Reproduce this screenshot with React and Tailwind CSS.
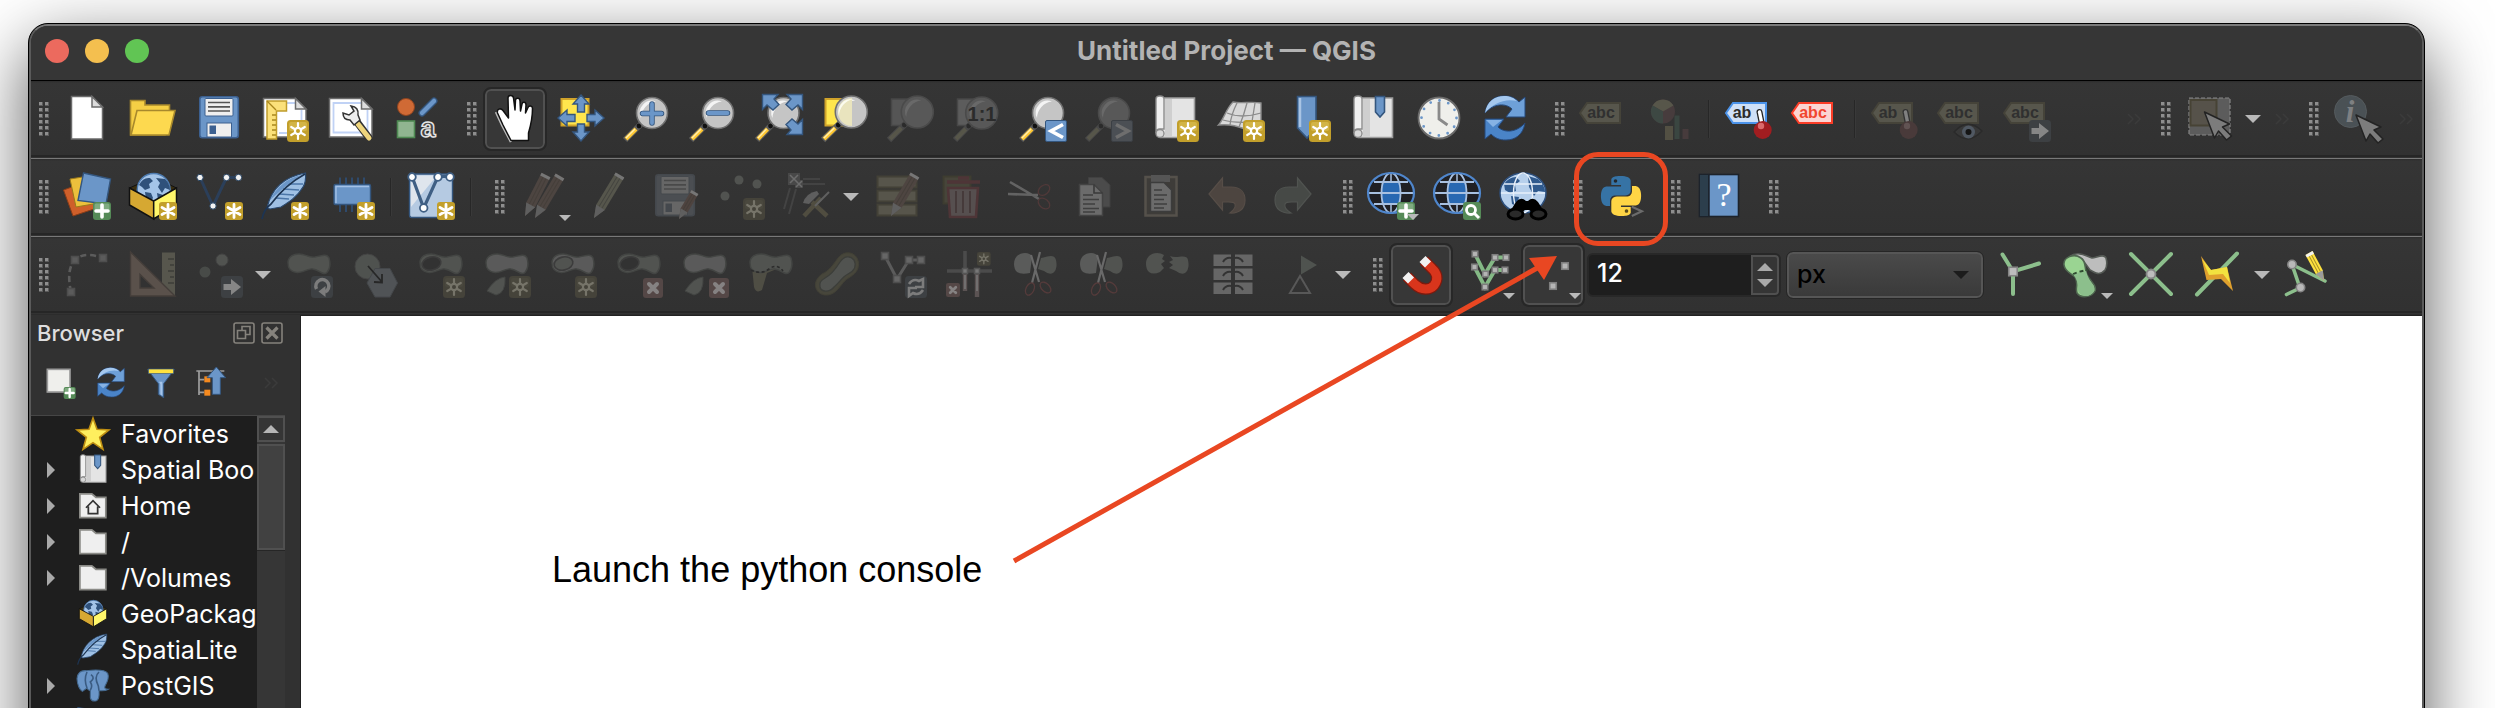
import React from "react";

/* ---------- shared drawing parts ---------- */

const BLUE = "#6b96c8";
const BLUE_EDGE = "#34567e";
const GREEN = "#8cbf8c";
const GLYPH = "#5b5b5b";
const MUTED = "#515350";

function Ico({ children, size = "w-12 h-12" }) {
  return (
    <svg viewBox="0 0 48 48" className={`${size} block shrink-0 overflow-visible`} fill="none" aria-hidden="true">
      {children}
    </svg>
  );
}

function Star({ dim, x = 26, y = 25 }) {
  const c = dim ? "#767469" : "#ffffff";
  return (
    <g transform={`translate(${x} ${y})`}>
      <rect width="22" height="22" rx="3.5" fill={dim ? "#45433a" : "#c29f2b"} />
      <rect x="2" y="2" width="18" height="9" rx="2" fill={dim ? "#4a483e" : "#d2b446"} />
      <g stroke={c} strokeWidth="2.2" strokeLinecap="round">
        <path d="M11 3V19M4.200 7L17.800 15M17.800 7L4.200 15" />
      </g>
      <circle cx="11" cy="11" r="4.2" fill={c} />
      <circle cx="11" cy="11" r="2" fill={dim ? "#45433a" : "#c29f2b"} />
    </g>
  );
}

function Asterisk() {
  return (
    <g transform="translate(30 29)">
      <rect width="18" height="18" rx="3" fill="#c29f2b" />
      <path d="M9 2.5V15.5M3 5.5L15 12.5M15 5.5L3 12.5" stroke="#fff" strokeWidth="2.8" strokeLinecap="round" />
    </g>
  );
}

function Plus({ x = 30, y = 29 }) {
  return (
    <g transform={`translate(${x} ${y})`}>
      <rect width="18" height="18" rx="3" fill="#558a57" />
      <rect x="1.5" y="1.5" width="15" height="7.5" rx="1.5" fill="#7fab80" />
      <path d="M9 3V15M3 9H15" stroke="#fff" strokeWidth="3.6" strokeLinecap="round" />
    </g>
  );
}

function Cross({ x = 28, y = 27, s = 1 }) {
  return (
    <g transform={`translate(${x} ${y}) scale(${s})`}>
      <rect width="20" height="20" rx="3" fill="#544746" />
      <path d="M6 6L14 14M14 6L6 14" stroke="#858282" strokeWidth="4" strokeLinecap="round" />
    </g>
  );
}

function ArrowBadge() {
  return (
    <g transform="translate(26 25)">
      <rect width="22" height="22" rx="3.5" fill="#3d4043" />
      <path d="M2.5 8H10V3L20 11L10 19V14H2.5Z" fill="#868686" />
    </g>
  );
}

function TurnBadge() {
  return (
    <g transform="translate(26 25)">
      <rect width="22" height="22" rx="3.5" fill="#3d4043" />
      <path d="M5.500 13A6.500 6.500 0 1 1 14 16" stroke="#7c7c7c" strokeWidth="3.400" />
      <path d="M14.500 10V21L7.500 15.500Z" fill="#7c7c7c" />
    </g>
  );
}

function Drop({ x = 46, y = 45 }) {
  return <path d={`M${x - 6} ${y - 3}H${x + 6}L${x} ${y + 3}Z`} fill="#b9b9b9" />;
}

function Lens({ cx = 29, cy = 18, r = 15.5, dim, children }) {
  return (
    <g>
      <path d={`M${cx - 10} ${cy + 10}L2 45`} stroke={dim ? "#484848" : "#5c5c5c"} strokeWidth="6" />
      <path d={`M${cx - 16} ${cy + 16}L3 44`} stroke={dim ? "#57564a" : "#ffc832"} strokeWidth="4" />
      <path d={`M${cx - 17} ${cy + 16}L3 43`} stroke={dim ? "#57564a" : "#ffeeb0"} strokeWidth="1.4" />
      <circle cx={cx - 13} cy={cy + 13} r="2.4" fill={dim ? "#2b2b2b" : "#111"} />
      <circle cx={cx} cy={cy} r={r} fill={dim ? "#585858" : "#c5c5c5"} stroke={dim ? "#4a4a4a" : "#6f6f6f"} strokeWidth="1.6" />
      <path d={`M${cx - 11} ${cy + 5}A12 12 0 0 1 ${cx + 4} ${cy - 11.5}A17 17 0 0 0 ${cx - 11} ${cy + 5}Z`} fill={dim ? "#696969" : "#f4f4f4"} />
      {children}
    </g>
  );
}

function Paper({ children }) {
  return (
    <g>
      <path d="M10 3H43.5V42.5H10Z" fill="#e4e4e4" stroke="#9d9d9d" strokeWidth="1.6" />
      <path d="M14 4H21V41.5H14Z" fill="#cfcfcf" />
      <path d="M5 4Q5 1 9 1Q13 1 13 4V34H9Q5 34 5 38Z" fill="#f0f0f0" stroke="#8c8c8c" strokeWidth="1.4" />
      <circle cx="9" cy="38.5" r="4" fill="#d9d9d9" stroke="#8c8c8c" strokeWidth="1.4" />
      {children}
    </g>
  );
}

function Pencil({ x1, y1, x2, y2, w = 9, body = "#57493f", tip = "#5f5f5f", cap = "#767676", line = "#453f3a" }) {
  const len = Math.hypot(x2 - x1, y2 - y1);
  const a = (Math.atan2(y2 - y1, x2 - x1) * 180) / Math.PI;
  const h = w / 2;
  const t = w * 1.25;
  return (
    <g transform={`translate(${x1} ${y1}) rotate(${a})`}>
      <path d={`M0 0L${t} ${-h}H${len}V${h}H${t}Z`} fill={body} />
      <path d={`M${t} ${-h / 3}H${len}M${t} ${h / 3}H${len}`} stroke={line} strokeWidth="1" />
      <path d={`M0 0L${t} ${-h}V${h}Z`} fill={tip} />
      <path d={`M${len - 3} ${-h}H${len}V${h}H${len - 3}Z`} fill={cap} />
    </g>
  );
}

function Tag({ fill, edge, ink, text }) {
  return (
    <g>
      <path d="M1 18L8 8H41V28H8Z" fill={fill} stroke={edge} strokeWidth="2" />
      <text x={text === "ab" ? 17 : 22} y="23" textAnchor="middle" fontSize="16" fontWeight="700" fontFamily="'Liberation Sans', Arial, sans-serif" fill={ink}>
        {text}
      </text>
    </g>
  );
}

const DimTag = ({ text }) => <Tag fill="#57564c" edge="#454339" ink="#303030" text={text} />;

function Pin({ dim }) {
  return (
    <g>
      <path d="M34.5 17L36.5 27" stroke={dim ? "#333" : "#222"} strokeWidth="6" strokeLinecap="round" />
      <path d="M34.5 17L36.5 27" stroke={dim ? "#808080" : "#fff"} strokeWidth="3.4" strokeLinecap="round" />
      <circle cx="37.7" cy="35" r="9" fill={dim ? "#493a3a" : "#a11d20"} />
      <circle cx="36" cy="31" r="3.2" fill={dim ? "#615353" : "#dc6a6a"} />
    </g>
  );
}

function Disk({ body, edge, paper, ink }) {
  return (
    <g>
      <rect x="4.8" y="1.8" width="38.5" height="41" rx="2.5" fill={body} stroke={edge} strokeWidth="1.6" />
      <rect x="10" y="3.5" width="28" height="17.5" rx="1" fill={paper} stroke={edge} />
      <path d="M13 7.5H35M13 11.8H35M13 16H35" stroke={ink} strokeWidth="1.7" />
      <rect x="12" y="28" width="24.5" height="14" fill={paper} stroke={edge} />
      <rect x="14.5" y="30.5" width="6.5" height="8.5" fill={edge} />
    </g>
  );
}

const BLOB = "M3 12C3 5 9 3 14 3C21 3 23 7 30 6C36 5 42 2 44 7C45.500 12 45 18 42 21.500C38 25 35 19 28 18C22 17 20 22 12 21.500C6 21 3 18 3 12Z";

const Blob = ({ fill = MUTED }) => <path d={BLOB} fill={fill} stroke="#434543" strokeWidth="1.4" />;
const Part = () => <path d="M4 40Q12 27 22 26Q23 42 13 44Z" fill={MUTED} stroke="#434543" />;

function Ring({ filled }) {
  return (
    <g>
      <Blob fill={filled ? "#5a5a5a" : MUTED} />
      <ellipse cx="14.500" cy="12.500" rx="9.500" ry="6.500" transform="rotate(-12 14.500 12.500)" fill={filled ? MUTED : "#323232"} stroke="#3c3c3c" strokeWidth="1.600" />
    </g>
  );
}

function Scissors() {
  return (
    <g>
      <path d="M29 1L21 32M20 4L28 31" stroke="#696969" strokeWidth="2.200" />
      <ellipse cx="19" cy="38" rx="4" ry="6.500" transform="rotate(25 19 38)" stroke="#553b3b" strokeWidth="1.300" />
      <ellipse cx="34.500" cy="36.500" rx="4" ry="6.500" transform="rotate(-45 34.500 36.500)" stroke="#553b3b" strokeWidth="1.300" />
    </g>
  );
}

function Halves() {
  return (
    <g>
      <path d="M3 13C3 6 8 2 14 2C18 2 21 4 21 6L19 22Q10 24 6 21Q3 18 3 13Z" fill="#5a5b5a" />
      <path d="M30 7C36 6 43 2 45 9Q47 18 42 22Q38 24 33 20L27 18Z" fill={MUTED} />
    </g>
  );
}

function Node({ x, y, s = 7, c = "#b5b5b5", e = "#7e7e7e" }) {
  return <rect x={x - s / 2} y={y - s / 2} width={s} height={s} fill={c} stroke={e} strokeWidth="1.6" />;
}

function Globe() {
  return (
    <g>
      <ellipse cx="24" cy="20" rx="23" ry="20" fill="#202024" />
      <ellipse cx="24" cy="20" rx="9.500" ry="20" fill="#202024" />
      <path d="M15 9H33Q35 20 33 31H15Q13 20 15 9Z" fill="#2868b2" />
      <path d="M7 9H41M2 20H46M7 31H41" stroke="#a8c0e0" strokeWidth="1.8" />
      <ellipse cx="24" cy="20" rx="9.500" ry="20" stroke="#a8c0e0" strokeWidth="1.800" />
      <path d="M24 0V8M24 32V40" stroke="#a8c0e0" strokeWidth="1.5" />
      <ellipse cx="24" cy="20" rx="23" ry="20" stroke="#4f86cc" strokeWidth="2.2" />
    </g>
  );
}

function Land() {
  return (
    <g fill="#2f517b">
      <path d="M10 12Q14 4 21 5L24 8L20 11L21 15L16 17L13 14Z" />
      <path d="M16 19L22 20L24 25L20 31L17 26Z" />
      <path d="M27 5L36 6Q41 11 41 17L36 15L33 20L29 14L31 10Z" />
      <path d="M28 20L34 22L33 29L29 27Z" />
    </g>
  );
}

function Package() {
  return (
    <g>
      <path d="M.5 15L24.700 4L47.500 15L24.700 28Z" fill="#3b2f10" stroke="#111" />
      <circle cx="24.700" cy="17" r="16.500" fill="#a4c4e8" stroke="#4d7bb0" strokeWidth="1.400" />
      <Land />
      <path d="M.5 15L24.700 28V46L.5 32Z" fill="#d6a832" stroke="#111" strokeWidth="1.500" />
      <path d="M47.500 15L24.700 28V46L47.500 32Z" fill="#fff76b" stroke="#111" strokeWidth="1.500" />
    </g>
  );
}

function Feather() {
  return (
    <g>
      <path d="M6 35C10 17 22 4 44.500 0C45 6 44 11 42 14C36 24 28 29 20 34L9 36Z" fill="#9fc0e4" stroke="#2b4a70" strokeWidth="1.200" />
      <path d="M15 25L28 26M18 21L33 22M22 16L38 17M27 11L42 11" stroke="#4c76a8" strokeWidth="1.400" />
      <path d="M9 27C15 15 26 5 40 2L25 13Z" fill={BLUE} />
      <path d="M1 46Q3 36 10 31Q24 12 44 1" stroke="#1d3452" strokeWidth="1.800" />
    </g>
  );
}

function Refresh() {
  return (
    <g stroke="#25487a" strokeWidth="1">
      <path d="M4 18C6 6 14 1 23 1C30 1 34 3 38 7L44 2V22H25L31 14C25 8 13 8 4 18Z" fill="#6ea0d8" />
      <path d="M4 18C6 6 14 1 23 1C29 1 33 3 36 6C24 3 12 8 4 18Z" fill="#a5c8ee" stroke="none" />
      <path d="M44 28C42 40 34 45 25 45C18 45 14 43 10 39L4 44V24H23L17 32C23 38 35 38 44 28Z" fill="#4a84c8" />
      <path d="M5 25H21L12 32Z" fill="#86b2e4" stroke="none" />
    </g>
  );
}

function Cursor({ x, y }) {
  return (
    <path
      transform={`translate(${x} ${y})`}
      d="M0 0L25 12L18 15L27 24L22 28L14 19L10 26Z"
      fill="#7c7c7c"
      stroke="#232323"
      strokeWidth="1.5"
      strokeLinejoin="round"
    />
  );
}

const FOUR_WAY = "M24 0L32 9H27.500V17H20.500V9H16ZM24 46L16 37H20.500V29H27.500V37H32ZM1 23L10 15V19.500H18V26.500H10V31ZM47 23L38 31V26.500H30V19.500H38V15Z";

const PY =
  "M14.25.18l.9.2.73.26.59.3.45.32.34.34.25.34.16.33.1.3.04.26.02.2-.01.13V8.5l-.05.63-.13.55-.21.46-.26.38-.3.31-.33.25-.35.19-.35.14-.33.1-.3.07-.26.04-.21.02H8.77l-.69.05-.59.14-.5.22-.41.27-.33.32-.27.35-.2.36-.15.37-.1.35-.07.32-.04.27-.02.21v3.06H3.17l-.21-.03-.28-.07-.32-.12-.35-.18-.36-.26-.36-.36-.35-.46-.32-.59-.28-.73-.21-.88-.14-1.05-.05-1.23.06-1.22.16-1.04.24-.87.32-.71.36-.57.4-.44.42-.33.42-.24.4-.16.36-.1.32-.05.24-.01h.16l.06.01h8.16v-.83H6.18l-.01-2.75-.02-.37.05-.34.11-.31.17-.28.25-.26.31-.23.38-.2.44-.18.51-.15.58-.12.64-.1.71-.06.77-.04.84-.02 1.27.05z";

/* ---------- icons ---------- */

const I = {
  newFile: (
    <>
      <path d="M8.500 1.500H29L39.500 12V44H8.500Z" fill="#fff" stroke="#6b6b6b" strokeWidth="1.500" />
      <path d="M29 1.500V12H39.500Z" fill="#dcdcdc" stroke="#6b6b6b" strokeWidth="1.500" />
    </>
  ),
  open: (
    <g stroke="#a8892c" strokeWidth="1.600">
      <path d="M1.500 40V5.500H16V10H40.500V20L36 40Z" fill="#f5cf45" />
      <path d="M8 15.500H46L40 40H2Z" fill="#fdd94f" />
    </g>
  ),
  save: <Disk body={BLUE} edge="#3c6090" paper="#efefef" ink="#555" />,
  newLayout: (
    <>
      <path d="M2.500 3.500H34.500L45 14V42H2.500Z" fill="#fff" stroke="#6b6b6b" strokeWidth="1.500" />
      <path d="M20 8H34M40.500 15V38H18" stroke="#c0d2f5" strokeWidth="1.800" />
      <path d="M34.500 3.500V14H45Z" fill="#ddd" stroke="#6b6b6b" strokeWidth="1.500" />
      <path d="M6 6H25.500V16H15.500V44H6Z" fill="#fbe17a" stroke="#bf9c2c" strokeWidth="1.500" />
      <path d="M6 6L15 15M11 20H15M11 25H15M11 30H15M11 35H15M11 40H15" stroke="#a8861e" strokeWidth="1.400" />
      <Star />
    </>
  ),
  layoutManager: (
    <>
      <path d="M2.500 3.500H34.500L45 14V42H2.500Z" fill="#fff" stroke="#6b6b6b" strokeWidth="1.500" />
      <path d="M34 8H6.500V37.500H40.500V15" stroke="#c0d2f5" strokeWidth="1.800" />
      <path d="M34.500 3.500V14H45Z" fill="#ddd" stroke="#6b6b6b" strokeWidth="1.500" />
      <path d="M30 27L42 43" stroke="#333" strokeWidth="7.500" strokeLinecap="round" />
      <path d="M31 29L42 43" stroke="#efd57c" strokeWidth="5" strokeLinecap="round" />
      <path d="M16 18Q16 25 23 25L27 30L33 25L31 20Q32 12 24 11L27 16L22 20Z" fill="#ededed" stroke="#333" strokeWidth="1.500" />
    </>
  ),
  style: (
    <>
      <circle cx="13" cy="12" r="8.500" fill="#d06a35" stroke="#8e431f" />
      <path d="M29 18L41 6" stroke={BLUE_EDGE} strokeWidth="7" strokeLinecap="round" />
      <path d="M29 18L41 6" stroke={BLUE} strokeWidth="4.500" strokeLinecap="round" />
      <rect x="4.500" y="26" width="17" height="16.500" fill="#90b590" stroke="#4f8a53" strokeWidth="1.600" />
      <text x="35" y="42" textAnchor="middle" fontSize="27" fontWeight="700" fontFamily="'Liberation Sans', Arial, sans-serif" fill="#444" stroke="#e6e6e6" strokeWidth="1.400">a</text>
    </>
  ),
  hand: (
    <>
      <path d="M20 47L11 30L5 17" stroke="#b9b9b9" strokeWidth="2.500" />
      <path
        d="M20 45.500L12 30L6.500 18C5.500 14 9.500 12.500 12 15.500L17.500 23L17 3C17 -.5 22 -.5 22.500 3L24 15L24.500 5C25 2.500 29 2.500 29 6L29.500 16L31 9C31.500 6.500 35 6.500 35 10L34.500 18L37 12.500C38 10 41.500 10.500 41.500 13.500C41.500 22 39 33 37.500 38V45.500Z"
        fill="#fff"
        stroke="#111"
        strokeWidth="1.500"
        strokeLinejoin="round"
      />
    </>
  ),
  panSel: (
    <>
      <rect x="4.500" y="4" width="27" height="26.500" fill="#ffe64d" stroke="#d0a32a" strokeWidth="2" />
      <path d={FOUR_WAY} fill={BLUE} stroke={BLUE_EDGE} strokeWidth="1.400" />
    </>
  ),
  zoomIn: (
    <Lens>
      <path d="M29 9V28M19.500 18.500H38.500" stroke={BLUE_EDGE} strokeWidth="5.500" strokeLinecap="round" />
      <path d="M29 9V28M19.500 18.500H38.500" stroke={BLUE} strokeWidth="3.800" strokeLinecap="round" />
    </Lens>
  ),
  zoomOut: (
    <Lens>
      <path d="M19.500 18H38.500" stroke={BLUE_EDGE} strokeWidth="5.500" strokeLinecap="round" />
      <path d="M19.500 18H38.500" stroke={BLUE} strokeWidth="3.800" strokeLinecap="round" />
    </Lens>
  ),
  zoomFull: (
    <Lens cx={28.5}>
      <path d="M7.500 -.5H23L19 4L24 9.500L18 15L12 10L7.500 14.500ZM47.500 -.5H32L36 4L31 9.500L37 15L43 10L47.500 14.500ZM47.500 39.500H32L36 35L31 29.500L37 24L43 29L47.500 24.500Z" fill={BLUE} stroke={BLUE_EDGE} strokeWidth="1.400" />
    </Lens>
  ),
  zoomLayer: (
    <>
      <rect x="4.500" y="4" width="24" height="26.500" fill="#ffe64d" stroke="#d0a32a" strokeWidth="2" />
      <Lens cx={30.3} cy={17} r={16}>
        <path d="M31 3A14 14 0 0 0 31 31Z" fill="#e9e4be" />
        <path d="M18 21A13 13 0 0 1 32 4A18 18 0 0 0 18 21Z" fill="#fbfbee" />
      </Lens>
    </>
  ),
  zoomSelDim: (
    <>
      <rect x="4.500" y="4" width="24" height="26.500" fill="#555" stroke="#474747" strokeWidth="1.500" />
      <Lens cx={30.3} cy={17} r={16} dim />
    </>
  ),
  zoomNative: (
    <>
      <rect x="4.500" y="4" width="24" height="26.500" fill="#5c5c5c" stroke="#474747" strokeWidth="1.500" />
      <Lens cx={28.7} cy={18} r={16} dim>
        <text x="29" y="25.500" textAnchor="middle" fontSize="20" fontWeight="700" fontFamily="'Liberation Sans', Arial, sans-serif" fill="#2b2b2b">1:1</text>
      </Lens>
    </>
  ),
  zoomLast: (
    <Lens>
      <rect x="26.500" y="25.500" width="21" height="21" rx="1.500" fill={BLUE} stroke={BLUE_EDGE} />
      <path d="M44 29.500L32 36L44 42.500" stroke="#fff" strokeWidth="3.600" />
    </Lens>
  ),
  zoomNext: (
    <Lens dim>
      <rect x="26.500" y="25.500" width="21" height="21" rx="1.500" fill="#4b4f54" stroke="#3b3f44" />
      <path d="M31 29.500L43 36L31 42.500" stroke="#6e6e6e" strokeWidth="3.600" />
    </Lens>
  ),
  newMap: (
    <Paper>
      <Star />
    </Paper>
  ),
  new3d: (
    <>
      <path d="M1.500 30C7 24 9 14 16 7C25 9 34 6 44 8V33Q36 36 28 34C18 30 10 29 1.500 30Z" fill="#d9d9d9" stroke="#8b8b8b" strokeWidth="1.400" />
      <path d="M10 18Q24 24 44 18M6 25Q20 29 44 26M20 8Q14 20 13 30M30 8Q27 20 22 32M38 8L34 33" stroke="#8b8b8b" strokeWidth="1.300" />
      <Star />
    </>
  ),
  newMark: (
    <>
      <path d="M14.500 1.500H33V33L24 43L14.500 33Z" fill={BLUE} stroke={BLUE_EDGE} strokeWidth="1.600" />
      <path d="M17 3V32" stroke="#a9c4e4" strokeWidth="2.500" />
      <Star />
    </>
  ),
  marks: (
    <Paper>
      <path d="M26.500 1.500H35.500V17L31 22L26.500 17Z" fill={BLUE} stroke={BLUE_EDGE} strokeWidth="1.600" />
    </Paper>
  ),
  clock: (
    <>
      <circle cx="24" cy="23" r="20.500" fill="#efefeb" stroke="#6b6b6b" strokeWidth="1.800" />
      <circle cx="24" cy="23" r="17.500" stroke={BLUE} strokeWidth="2.800" strokeDasharray="0 9.163" strokeLinecap="round" />
      <path d="M24 7V24L32.500 30" stroke="#8a8a8a" strokeWidth="2.800" />
    </>
  ),
  refresh: <Refresh />,
  abcDim: <DimTag text="abc" />,
  diagram: (
    <>
      <circle cx="18" cy="16.500" r="12" fill="#473c3d" />
      <path d="M18 16.500L7.600 10.500A12 12 0 0 1 28.400 10.500Z" fill="#57564a" />
      <path d="M18 16.500L7.600 10.500A12 12 0 0 0 18 28.500Z" fill="#3d4843" />
      <rect x="20" y="31" width="8" height="14" fill="#535043" />
      <rect x="29.500" y="20.500" width="5" height="23.500" fill="#3a4641" />
      <rect x="37.500" y="34" width="6" height="10" fill="#473b3c" />
    </>
  ),
  abPin: (
    <>
      <Tag fill="#cfe0f7" edge="#4b93ea" ink="#2c2c2c" text="ab" />
      <Pin />
    </>
  ),
  abcRed: <Tag fill="#fbd5d3" edge="#fb3d27" ink="#f1452f" text="abc" />,
  abPinDim: (
    <>
      <DimTag text="ab" />
      <Pin dim />
    </>
  ),
  abcEye: (
    <>
      <DimTag text="abc" />
      <path d="M17 37Q31 22 45 36Q31 51 17 37Z" fill="#383838" stroke="#2a2a2a" strokeWidth="1.400" />
      <circle cx="31.500" cy="37" r="6.500" fill="#505862" />
      <circle cx="31.500" cy="37" r="3" fill="#151515" />
    </>
  ),
  abcMove: (
    <>
      <DimTag text="abc" />
      <ArrowBadge />
    </>
  ),
  select: (
    <>
      <rect x="4" y="3" width="41" height="37" fill="#5c5c5c" stroke="#858585" strokeWidth="1.200" strokeDasharray="4 2" />
      <rect x="5.500" y="5" width="26" height="25.500" fill="#56524a" stroke="#474335" strokeWidth="2" />
      <Cursor x={19.5} y={17} />
    </>
  ),
  identify: (
    <>
      <circle cx="17.500" cy="16.500" r="16" fill="#4a5155" stroke="#555b5e" />
      <text x="17" y="27" textAnchor="middle" fontSize="31" fontStyle="italic" fontWeight="700" fontFamily="'Liberation Serif', serif" fill="#7e8082">i</text>
      <Cursor x={23} y={20} />
    </>
  ),

  dataSource: (
    <>
      <path d="M.5 17L20 10L34 35L10 43Z" fill="#cf5f2a" stroke="#8b3d18" />
      <path d="M7 6L26 3L36 30L13 34Z" fill="#ecc03c" stroke="#9a7a1c" />
      <path d="M20.500 0L47.500 6L43 31L15 27.500Z" fill={BLUE} stroke={BLUE_EDGE} strokeWidth="1.400" />
      <Plus />
    </>
  ),
  geopackage: (
    <>
      <Package />
      <Asterisk />
    </>
  ),
  shapefile: (
    <>
      <path d="M5 4.500L18 33L31.500 4.500H43.500" stroke="#2b3f5a" strokeWidth="3" />
      {[[5, 4.5], [18, 33], [31.5, 4.5], [43.5, 4.5]].map(([x, y]) => (
        <circle key={x} cx={x} cy={y} r="3.200" fill="#f2f2f2" stroke="#24405f" />
      ))}
      <Asterisk />
    </>
  ),
  spatialite: (
    <>
      <Feather />
      <Asterisk />
    </>
  ),
  memory: (
    <>
      <path d="M13 4.500V39M19 4.500V39M25 4.500V39M31 4.500V39M37 4.500V39" stroke="#2e4d73" strokeWidth="1.800" />
      <rect x="7" y="11.500" width="36.500" height="20" rx="1.500" fill={BLUE} stroke={BLUE_EDGE} strokeWidth="1.400" />
      <path d="M9 30V13.500H42" stroke="#a3c1e6" strokeWidth="1.400" />
      <Asterisk />
    </>
  ),
  virtual: (
    <>
      <rect x="2.500" y="1" width="43" height="43.500" rx="2.500" fill="#b5cae2" stroke="#34567e" strokeWidth="1.400" />
      <path d="M4 2.500H30L4 34Z" fill="#dfe5ed" />
      <path d="M5 3.500L16.700 35L31 3.500H43.500" stroke="#3f5f84" strokeWidth="3.200" />
      {[[5, 4], [16.7, 35], [31, 4], [43, 4]].map(([x, y]) => (
        <circle key={x} cx={x} cy={y} r="3.800" fill="#fff" stroke="#3f5f84" strokeWidth="1.800" />
      ))}
      <Asterisk />
    </>
  ),
  pencils: (
    <>
      <Pencil x1={6} y1={43} x2={27} y2={2} w={10} body="#4d4541" />
      <Pencil x1={16} y1={45} x2={41} y2={3} w={10} body="#4d4541" />
      <Drop />
    </>
  ),
  pencil: <Pencil x1={9} y1={45} x2={35} y2={2} w={10} body="#56564c" line="#454540" />,
  saveEdits: (
    <>
      <Disk body="#4b4e52" edge="#44484d" paper="#666" ink="#494949" />
      <Pencil x1={28} y1={46} x2={44} y2={19} w={8} body="#4e433f" />
    </>
  ),
  addPoints: (
    <>
      <circle cx="22" cy="7" r="4.500" fill={MUTED} />
      <circle cx="40" cy="11" r="4.500" fill={MUTED} />
      <circle cx="8" cy="23" r="4.500" fill={MUTED} />
      <Star dim />
    </>
  ),
  vertexTool: (
    <>
      <rect x="5" y="0" width="12" height="12" fill="#484848" />
      <rect x="12" y="7" width="8" height="8" fill="#484848" />
      <path d="M7 2L15 10M15 2L7 10M13 8L19 14M19 8L13 14" stroke="#6c6c6c" strokeWidth="1.600" />
      <path d="M20 6H37M20 11H42M7 15L1 36M13 16L6 41" stroke="#434343" strokeWidth="2" />
      <path d="M21 43L38 25" stroke="#504d40" strokeWidth="4.500" />
      <path d="M44 43L29 29" stroke="#504d40" strokeWidth="4.500" />
      <path d="M46 19L32 33" stroke="#606060" strokeWidth="2" />
      <path d="M20 30Q23 20 34 18L36 21L26 31Z" fill="#5e5e5e" />
    </>
  ),
  attributes: (
    <>
      <path d="M4.500 3.500H43.500V14.500H4.500ZM4.500 17.500H43.500V28.500H4.500ZM4.500 31.500H43.500V42.500H4.500Z" fill="#57554b" stroke="#434137" strokeWidth="2" />
      <Pencil x1={18} y1={43} x2={42} y2={2} w={10} body="#4e4541" />
    </>
  ),
  trash: (
    <>
      <rect x="4.500" y="3.500" width="27" height="27" fill="#54513f" stroke="#45432f" strokeWidth="2" opacity=".6" />
      <path d="M9 15H39L37 44H11Z" fill="#564f4f" stroke="#4e3537" strokeWidth="2.600" />
      <path d="M8 9H41M19 5H30" stroke="#4e3537" strokeWidth="3.400" />
      <path d="M17 18V40M24 18V40M31 18V40" stroke="#443838" strokeWidth="1.800" />
    </>
  ),
  cut: (
    <>
      <path d="M5 9L34 26M3 21L33 22" stroke="#636363" strokeWidth="2.600" />
      <ellipse cx="39" cy="17" rx="6.500" ry="4.500" transform="rotate(-40 39 17)" stroke="#503939" strokeWidth="1.300" />
      <ellipse cx="39" cy="30.500" rx="6.500" ry="4.500" transform="rotate(40 39 30.500)" stroke="#503939" strokeWidth="1.300" />
    </>
  ),
  copy: (
    <>
      <path d="M17.500 4.500H31L39 12V34H17.500Z" fill="#4b4b4b" stroke="#414141" />
      <path d="M8.500 11.500H23L31.500 20V42.500H8.500Z" fill="#6b6b6b" stroke="#434343" strokeWidth="1.500" />
      <path d="M23 11.500V20H31.500" stroke="#3a3a3a" strokeWidth="1.600" />
      <path d="M12 22H22M12 26.500H28M12 31H24M12 35.500H28M12 39H24" stroke="#3f3f3f" strokeWidth="1.700" />
    </>
  ),
  paste: (
    <>
      <rect x="8.500" y="4" width="31" height="38.500" fill="#3e3c39" stroke="#55514b" strokeWidth="2.500" />
      <rect x="14" y="2" width="19" height="7" fill="#555" />
      <path d="M13.500 9.500H27L34.500 17V38.500H13.500Z" fill="#6b6b6b" stroke="#3c3c3c" strokeWidth="1.400" />
      <path d="M17 17H25M17 22H30M17 26.500H27M17 31H30M17 35H27" stroke="#3f3f3f" strokeWidth="1.700" />
    </>
  ),
  undo: <path d="M6 21L19.500 5V14H28C38 14 42 20 42 27C42 36 36 40.500 27 40C31 37 33 34 32 31C31 28 27 29 19.500 29V37Z" fill="#4d4540" stroke="#564d47" strokeWidth="1.200" />,
  redo: <path d="M42 21L28.500 5V14H20C10 14 6 20 6 27C6 36 12 40.500 22 40C17 37 15 34 16 31C17 28 21 29 28.500 29V37Z" fill="#464946" stroke="#505350" strokeWidth="1.200" />,
  globeAdd: (
    <>
      <Globe />
      <Plus />
      <Drop x={46} y={44} />
    </>
  ),
  globeSearch: (
    <>
      <Globe />
      <rect x="30" y="29" width="18" height="18" rx="3" fill="#558a57" />
      <circle cx="38" cy="37" r="4.500" stroke="#fff" strokeWidth="2.800" />
      <path d="M41 40L46 45" stroke="#fff" strokeWidth="3" />
    </>
  ),
  metaSearch: (
    <>
      <ellipse cx="24" cy="20" rx="23" ry="20" fill="#b7d0ec" stroke="#2d4f7c" strokeWidth="1.500" />
      <path d="M5 11Q10 4 17 4L21 8L16 12L17 18L11 20L6 17ZM29 3L39 6Q46 12 46 19L39 18L35 23L30 14ZM12 23L20 24L18 33L13 31Z" fill="#2f5a8e" />
      <ellipse cx="24" cy="20" rx="9.500" ry="20" stroke="#e8f0fa" strokeWidth="1.400" />
      <path d="M5 11H43M2 20H46" stroke="#e8f0fa" strokeWidth="1.400" />
      <path d="M17 29Q22 23 27 28H29Q34 23 39 29L46 40L40 44L30 37H26L15 45L10 40Z" fill="#000" />
      <ellipse cx="16.500" cy="41" rx="7.500" ry="5" fill="#2a2a2a" stroke="#000" strokeWidth="3" />
      <ellipse cx="39.500" cy="41" rx="7.500" ry="5" fill="#2a2a2a" stroke="#000" strokeWidth="3" />
    </>
  ),
  python: (
    <g transform="translate(4 3) scale(1.667)">
      <path d={PY} fill="#3673a5" />
      <circle cx="8.700" cy="3" r="1.100" fill="#23282d" />
      <g transform="rotate(180 12 12)">
        <path d={PY} fill="#ffd545" />
        <circle cx="8.700" cy="3" r="1.100" fill="#5c4c1a" />
      </g>
      <path d="M18.500 18.500L24.500 21.200L18.500 24" stroke="#6b6b6b" strokeWidth="1.300" />
    </g>
  ),
  help: (
    <>
      <rect x="4.500" y="1.500" width="39" height="42" fill={BLUE} stroke="#1d232b" strokeWidth="1.600" />
      <rect x="5" y="2" width="9" height="41" fill="#2c3e4c" />
      <path d="M14 2V43" stroke="#171b22" strokeWidth="1.400" />
      <text x="29" y="33" textAnchor="middle" fontSize="34" fontFamily="'Liberation Serif', serif" fill="#fff">?</text>
    </>
  ),

  curve: (
    <>
      <path d="M8 41Q3 18 12 9T40 7" stroke="#5c5c5c" strokeWidth="2.600" strokeDasharray="6 4" />
      <Node x={8} y={41} c={GLYPH} e="#4e4e4e" />
      <Node x={12} y={9} c={GLYPH} e="#4e4e4e" />
      <Node x={40} y={7} c={GLYPH} e="#4e4e4e" />
    </>
  ),
  advDigitize: (
    <>
      <rect x="33" y="1.500" width="13" height="43" fill="#57564d" />
      <path d="M39 8H45M41 14H45M39 20H45M41 26H45M39 32H45" stroke="#3e3e38" strokeWidth="1.500" />
      <path d="M1.500 1V45H46Z" fill="#5a514b" stroke="#443e3a" strokeWidth="1.400" />
      <path d="M11 23.500V37H25Z" fill="#323232" stroke="#443e3a" strokeWidth="1.400" />
    </>
  ),
  movePoint: (
    <>
      <circle cx="27" cy="9" r="6" fill={MUTED} stroke="#444" />
      <circle cx="10" cy="21" r="5.500" fill="#484b48" />
      <ArrowBadge />
    </>
  ),
  rotate: (
    <>
      <Blob />
      <TurnBadge />
    </>
  ),
  scale: (
    <>
      <circle cx="16.500" cy="15.500" r="12.500" fill="#4f524f" stroke="#444" />
      <path d="M24 17.500H39L46.500 32L39 46H24L16 32Z" fill="#505356" stroke="#44474a" />
      <path d="M17 15L31 31M31 23V31.500L23 31" stroke="#272727" strokeWidth="1.800" />
    </>
  ),
  addRing: (
    <>
      <Ring />
      <Star dim />
    </>
  ),
  addPart: (
    <>
      <Blob fill="#5a5a5a" />
      <Part />
      <Star dim />
    </>
  ),
  fillRing: (
    <>
      <Ring filled />
      <Star dim />
    </>
  ),
  delRing: (
    <>
      <Ring />
      <Cross />
    </>
  ),
  delPart: (
    <>
      <Blob fill="#5a5a5a" />
      <Part />
      <Cross />
    </>
  ),
  reshape: (
    <>
      <path d="M5 16L7 36Q9 43 15 39L20 22L32 17Z" fill="#4f4e44" />
      <Blob />
      <path d="M4 19Q14 24 22 18T36 20" stroke="#2c2c2c" strokeWidth="1.600" strokeDasharray="3 2.500" />
    </>
  ),
  offset: (
    <>
      <path d="M9 23C16 20 20 14 25 7C30 0 40 0 44 7C48 15 44 22 37 26C31 29 29 34 24 39C18 46 6 46 3 37C1 31 5 26 9 23Z" fill="#47463b" stroke="#424136" />
      <path d="M12 27C18 24 22 19 27 11C31 5 37 4 41 9C44 15 41 20 35 23C29 26 26 32 21 36C16 42 8 41 7 36C6 32 8 29 12 27Z" fill={MUTED} stroke="#3c3e3a" strokeWidth="1.300" />
    </>
  ),
  reverse: (
    <>
      <path d="M6 5L18 28L30 9H42" stroke={GLYPH} strokeWidth="3" />
      {[[6, 5], [18, 28], [30, 9], [42, 9]].map(([x, y]) => (
        <Node key={x} x={x} y={y} c="#666" e="#4e4e4e" />
      ))}
      <rect x="26" y="25" width="22" height="22" rx="3.500" fill="#3d4043" />
      <path d="M30 33Q34 27 40 30L44 28V36H36M44 39Q40 45 34 42L30 45V37H38" stroke="#7c7c7c" strokeWidth="2.600" />
    </>
  ),
  trim: (
    <>
      <path d="M20 0V20M2 20H47" stroke="#4b4b4b" strokeWidth="3.600" />
      <path d="M20 22V40M32 22V46" stroke="#5b5353" strokeWidth="4.400" />
      <path d="M20 24V38M32 24V40" stroke="#777" strokeWidth="1.600" />
      <Node x={20} y={20} s={5} c="#777" e="#555" />
      <Node x={32} y={20} s={5} c="#777" e="#555" />
      <Cross x={1} y={32} s={0.7} />
      <g transform="translate(32 1) scale(.62)">
        <Star dim x={0} y={0} />
      </g>
    </>
  ),
  split: (
    <>
      <Halves />
      <Scissors />
    </>
  ),
  merge: (
    <>
      <path d="M3 13C3 6 8 2 14 2Q18 2 21 4L19 8L22 10L18 13L21 17L17 21Q10 24 6 21Q3 18 3 13Z" fill={MUTED} />
      <path d="M27 5C34 8 44 2 45 9Q47 18 42 22Q38 24 33 20L26 17L30 14L26 11L30 9Z" fill={MUTED} />
    </>
  ),
  mergeAttr: (
    <>
      <path d="M4.500 3.500H22V15H4.500ZM26 3.500H43.500V15H26ZM4.500 17.500H22V29H4.500ZM26 17.500H43.500V29H26ZM4.500 31.500H22V43H4.500ZM26 31.500H43.500V43H26Z" fill="#666" />
      <path d="M14 11Q17 6 22 7M26 7Q31 6 34 11M14 25Q17 20 22 21M26 21Q31 20 34 25M14 39Q17 34 22 35M26 35Q31 34 34 39" stroke="#333" strokeWidth="2" />
    </>
  ),
  symbols: (
    <>
      <path d="M26 4.500L42 14L26 23.500Z" fill="#4f534f" />
      <path d="M25 25L15 42H35Z" stroke="#585858" strokeWidth="2" />
    </>
  ),
  magnet: (
    <>
      <path d="M10 25.500L17.500 33C25 40 33 39 37 34.500C42 28 40 22 35 17.500L27 9.500" stroke="#7c1a0e" strokeWidth="11.500" />
      <path d="M10.500 26L17.500 33C25 40 33 39 37 34.500C42 28 40 22 35 17.500L27.500 10" stroke="#d8351c" strokeWidth="9" />
      <path d="M8.500 24L14 29.500M25.500 8L31 13.500" stroke="#f1f1f1" strokeWidth="8.500" />
    </>
  ),
  snapLayers: (
    <>
      <path d="M12 3L22 23L32 6.500H43M11.500 16L22 36L32 19H42" stroke="#84b985" strokeWidth="3.800" />
      {[[12, 3], [11.5, 16], [22.5, 23], [22, 36], [32, 6.5], [43, 6.5], [32, 19], [42, 19]].map(([x, y]) => (
        <Node key={`${x}-${y}`} x={x} y={y} s={5.5} />
      ))}
      <Drop />
    </>
  ),
  snapVertex: (
    <>
      <Node x={12} y={11} s={6.5} />
      <Node x={36} y={15} s={6.5} />
      <Node x={24} y={35} s={6.5} />
      <Drop />
    </>
  ),
  topology: (
    <>
      <path d="M6.500 3.500L17 20.500L43 12.500M17 20.500V43" stroke={GREEN} strokeWidth="4" strokeLinecap="round" />
      <Node x={17} y={20.5} s={8.5} c="#bdbdbd" e="#858585" />
    </>
  ),
  overlap: (
    <>
      <path d="M6 7C14 -1 22 4 30 7C34 7 42 2 44 7Q46 14 43 19C38 25 33 22 28 19L20 8Z" fill="#bdbdbd" stroke="#555a55" strokeWidth="1.600" />
      <path d="M2 14C1 6 12 2 19 7C25 11 22 17 25 24C29 31 35 35 33 40C30 46 19 48 15 42C13 37 17 32 13 26C9 22 3 21 2 14Z" fill="#9ad492" stroke="#4f6650" strokeWidth="1.600" />
      <path d="M11 23Q17 21 24 20Q26 28 32 35Q34 42 26 45Q17 45 16 39Q17 31 11 23Z" fill={GREEN} />
      <path d="M11 23Q18 20 26 19" stroke="#2f4a30" strokeWidth="1.800" strokeDasharray="4 3" />
      <Drop x={45} />
    </>
  ),
  intersect: (
    <>
      <path d="M3 3L43 43M43 3L3 43" stroke={GREEN} strokeWidth="4" strokeLinecap="round" />
      <circle cx="23" cy="23" r="4.500" fill="#bdbdbd" stroke="#858585" strokeWidth="1.800" />
    </>
  ),
  selfSnap: (
    <>
      <path d="M3 43.500L43 2.500" stroke={GREEN} strokeWidth="4" strokeLinecap="round" />
      <path d="M7 5L17 19L33 16L39 40L27 28L12.500 29Z" fill="#dfa02e" />
      <path d="M8 8L17 19L33 16L36 32L29 23L15 24Z" fill="#f2e23f" />
    </>
  ),
  trace: (
    <>
      <path d="M2.500 43.500L16 37L8 13.500L41 30" stroke={GREEN} strokeWidth="3.600" strokeLinecap="round" strokeLinejoin="round" />
      <circle cx="8" cy="13.500" r="4.200" fill="#b9b9b9" stroke="#858585" strokeWidth="1.600" />
      <circle cx="16.500" cy="36.500" r="4.200" fill="#b9b9b9" stroke="#858585" strokeWidth="1.600" />
      <Pencil x1={40} y1={30} x2={25} y2={2} w={8} body="#ffe23f" tip="#9b9b9b" cap="#f2f2f2" line="#a8922a" />
    </>
  ),

  addLayer: (
    <>
      <rect x="3.500" y="3.500" width="34" height="34" fill="#efefec" stroke="#9b9b9b" strokeWidth="2.500" />
      <Plus x={28} y={30} />
    </>
  ),
  filter: (
    <>
      <path d="M4 4H44L28 25V46L20 41V25Z" fill={BLUE} stroke={BLUE_EDGE} strokeWidth="1.500" />
      <path d="M21 22H26V43L23 41V26Z" fill="#a6c5ea" />
      <rect x="5" y="3" width="38" height="7" fill="#ffe23f" stroke="#34567e" />
    </>
  ),
  collapse: (
    <>
      <path d="M2 6H44M6 6V42M6 19H14M6 38H14" stroke="#9c9c9c" strokeWidth="2.600" />
      <rect x="14" y="14" width="9" height="9" fill="#f58a1f" />
      <rect x="14" y="34" width="9" height="9" fill="#f58a1f" />
      <path d="M32 0L46 16H38V41H26V16H18Z" fill={BLUE} stroke={BLUE_EDGE} strokeWidth="1.500" />
    </>
  ),
  star: (
    <path d="M24 0L30 17L48 18L34 29L39 47L24 37L9 47L14 29L0 18L18 17Z" fill="#ffef5e" stroke="#bd8d12" strokeWidth="2.400" />
  ),
  folder: <path d="M1.500 44V3H22L29 9H46V44Z" fill="#efefef" stroke="#8a8a86" strokeWidth="3" />,
  home: (
    <>
      <path d="M1.500 44V3H22L29 9H46V44Z" fill="#efefef" stroke="#8a8a86" strokeWidth="3" />
      <path d="M12 27L24 15L36 27M16 25V37H32V25" stroke="#333" strokeWidth="3" />
    </>
  ),
  package: <Package />,
  feather: <Feather />,
  elephant: (
    <>
      <path d="M14 1Q1 0 0 13Q1 27 8 32L15 27Q18 32 20 30V42Q22 48 29 46Q34 44 33 31Q42 32 47 29Q40 29 42 24Q49 12 46 5Q41 -2 14 1Z" fill={BLUE} stroke="#44698f" strokeWidth="1.600" />
      <path d="M15 3Q10 14 15 27M33 3Q25 10 32 24L33 31M20 30Q24 24 20 18Q28 12 21 7" stroke="#3a5b82" strokeWidth="2.400" />
    </>
  ),
  server: <path d="M1 2L24 6L36 8V46H1Z" fill="#3d5a7c" stroke="#34567e" />,
};

/* ---------- toolbar building blocks ---------- */

function Grip() {
  return (
    <span className="mr-[5px] grid shrink-0 grid-cols-2 gap-[2px]" aria-hidden="true">
      {Array.from({ length: 12 }, (_, i) => (
        <span key={i} className="h-1 w-1 border-b border-r border-[#5c5c5c] bg-[#8e8e8e]" />
      ))}
    </span>
  );
}

function Tool({ name, icon, checked, children }) {
  return (
    <button type="button" aria-label={name} title={name} className="relative flex h-[66px] w-[66px] shrink-0 items-center justify-center">
      <span
        className={
          checked
            ? "flex h-[60px] w-[60px] items-center justify-center rounded-md border-2 border-[#515151] bg-[#373737] outline-2 outline-[#272727]"
            : "flex items-center justify-center"
        }
      >
        <Ico>{I[icon]}</Ico>
      </span>
      {children}
    </button>
  );
}

function MenuArrow({ name }) {
  return (
    <button type="button" aria-label={name} className="flex h-[66px] w-6 shrink-0 items-center justify-center pr-[2px]">
      <svg viewBox="0 0 16 8" className="h-2 w-4" aria-hidden="true">
        <path d="M0 0H16L8 8Z" fill="#b9b9b9" />
      </svg>
    </button>
  );
}

function Sep() {
  return <span className="mx-1.5 h-[38px] w-[2px] shrink-0 border-l border-[#272727] bg-[#393939]" />;
}

function More() {
  return (
    <span className="ml-auto shrink-0" aria-hidden="true">
      <svg viewBox="0 0 16 12" className="h-3 w-4" fill="none" stroke="#3b3b3b" strokeWidth="1.5">
        <path d="M2 1L7 6L2 11M9 1L14 6L9 11" />
      </svg>
    </span>
  );
}

function Bar({ children, className = "pl-[11px] pr-1.5" }) {
  return <div className={`flex shrink-0 items-center ${className}`}>{children}</div>;
}

function Row({ children, last }) {
  return (
    <div
      className={`flex h-[78px] items-center border-b pb-px ${last ? "border-[#2c2c2c]" : "border-[#787878]"} bg-[linear-gradient(to_bottom,#2c2c2c_0,#353535_2px,#313131_74px,#262626_74px,#262626_76px,#323232_76px)]`}
    >
      {children}
    </div>
  );
}

const tools = (list) => list.map(([name, icon], i) => <Tool key={i} name={name} icon={icon} />);

/* ---------- browser panel ---------- */

const TREE = [
  ["Favorites", "star", false],
  ["Spatial Boo", "marks", true],
  ["Home", "home", true],
  ["/", "folder", true],
  ["/Volumes", "folder", true],
  ["GeoPackag", "package", false],
  ["SpatiaLite", "feather", false],
  ["PostGIS", "elephant", true],
  ["", "server", false],
];

function BrowserPanel() {
  return (
    <aside className="flex w-[269px] shrink-0 flex-col bg-[#313131] pr-[15px]">
      <div className="flex h-9 items-center pl-1.5">
        <h2 className="text-[22px] leading-7 font-medium text-[#dedede]">Browser</h2>
        <button type="button" aria-label="Float panel" className="ml-auto">
          <svg viewBox="0 0 22 22" className="h-[22px] w-[22px]" fill="none" stroke="#85827c" strokeWidth="1.6" aria-hidden="true">
            <rect x="1" y="1" width="20" height="20" rx="2" />
            <path d="M4.500 8.500H12.500V16.500H4.500ZM9 8V4.500H17V12.500H13" />
          </svg>
        </button>
        <button type="button" aria-label="Close panel" className="ml-1.5 mr-[2px]">
          <svg viewBox="0 0 22 22" className="h-[22px] w-[22px]" fill="none" stroke="#85827c" strokeWidth="1.6" aria-hidden="true">
            <rect x="1" y="1" width="20" height="20" rx="2" />
            <path d="M5.500 5.500L16.500 16.500M16.500 5.500L5.500 16.500" strokeWidth="3.2" />
          </svg>
        </button>
      </div>
      <div className="flex h-16 items-center gap-[18px] pl-[14px] pr-1.5">
        {[["Add Selected Layers", "addLayer"], ["Refresh", "refresh"], ["Filter Browser", "filter"], ["Collapse All", "collapse"]].map(([n, i]) => (
          <button key={n} type="button" aria-label={n}>
            <Ico size="w-8 h-8">{I[i]}</Ico>
          </button>
        ))}
        <More />
      </div>
      <div className="flex min-h-0 flex-1 border-t border-[#464646]">
        <ul className="min-w-0 flex-1 overflow-hidden bg-[#1e1e1e]">
          {TREE.map(([label, icon, open]) => (
            <li key={icon + label} className="flex h-9 items-center whitespace-nowrap text-[25px] leading-9 text-white">
              <span className="flex w-[46px] shrink-0 pl-4">
                {open && (
                  <svg viewBox="0 0 8 16" className="h-4 w-2" aria-hidden="true">
                    <path d="M0 0L8 8L0 16Z" fill="#a9a9a9" />
                  </svg>
                )}
              </span>
              <span className="mr-3 flex h-8 w-8 shrink-0 items-center justify-center">
                <Ico size={icon === "star" || icon === "feather" || icon === "elephant" || icon === "marks" || icon === "server" ? "w-8 h-8" : "w-7 h-7"}>{I[icon]}</Ico>
              </span>
              {label}
            </li>
          ))}
        </ul>
        <div className="flex w-7 shrink-0 flex-col bg-[#363636]">
          <button type="button" aria-label="Scroll up" className="flex h-[26px] shrink-0 items-center justify-center border-2 border-[#505050] bg-[#353535]">
            <svg viewBox="0 0 16 8" className="h-2 w-4" aria-hidden="true">
              <path d="M0 8H16L8 0Z" fill="#b5b5b5" />
            </svg>
          </button>
          <div className="mt-[2px] h-[106px] shrink-0 border-2 border-[#505050] bg-[#414141]" />
          <div className="h-px bg-[#262626]" />
        </div>
      </div>
    </aside>
  );
}

/* ---------- page ---------- */

export default function App() {
  return (
    <main className="relative flex h-screen flex-col overflow-hidden bg-white pt-[23px] pr-[70px] pl-7 font-['Inter','Noto_Sans',sans-serif]">
      <section className="-mb-24 flex flex-1 flex-col overflow-hidden rounded-[20px] border border-black bg-[#323232] shadow-[0_24px_70px_rgba(0,0,0,0.66)]">
        <div className="flex min-h-0 flex-1 flex-col overflow-hidden rounded-[19px] border-2 border-[#5a5a5a] border-t-[#7a7a7a]">
          <header className="grid h-[55px] shrink-0 grid-cols-[1fr_auto_1fr] items-center border-b border-black bg-[#363636] pb-1">
            <div className="flex gap-4 pl-[14px]">
              <button type="button" aria-label="Close" className="h-6 w-6 rounded-full bg-[#ec6a5e]" />
              <button type="button" aria-label="Minimize" className="h-6 w-6 rounded-full bg-[#f4bf4f]" />
              <button type="button" aria-label="Zoom" className="h-6 w-6 rounded-full bg-[#61c554]" />
            </div>
            <h1 className="text-[26px] leading-8 font-bold text-[#b3b3b3]">Untitled Project — QGIS</h1>
          </header>

          <nav aria-label="Toolbars" className="shrink-0">
            <Row>
              <Bar className="pl-2 pr-1.5">
                <Grip />
                {tools([["New Project", "newFile"], ["Open Project", "open"], ["Save Project", "save"], ["New Print Layout", "newLayout"], ["Layout Manager", "layoutManager"], ["Style Manager", "style"]])}
              </Bar>
              <Bar>
                <Grip />
                <Tool name="Pan Map" icon="hand" checked />
                {tools([
                  ["Pan Map to Selection", "panSel"], ["Zoom In", "zoomIn"], ["Zoom Out", "zoomOut"], ["Zoom Full", "zoomFull"],
                  ["Zoom to Selection", "zoomLayer"], ["Zoom to Layer", "zoomSelDim"], ["Zoom to Native Resolution", "zoomNative"],
                  ["Zoom Last", "zoomLast"], ["Zoom Next", "zoomNext"], ["New Map View", "newMap"], ["New 3D Map View", "new3d"],
                  ["New Spatial Bookmark", "newMark"], ["Show Spatial Bookmarks", "marks"], ["Temporal Controller", "clock"], ["Refresh", "refresh"],
                ])}
              </Bar>
              <Bar className="min-w-0 flex-1 pl-[11px] pr-2">
                <Grip />
                {tools([["Layer Labeling Options", "abcDim"], ["Layer Diagram Options", "diagram"]])}
                <Sep />
                {tools([["Highlight Pinned Labels", "abPin"], ["Toggle Unplaced Labels", "abcRed"]])}
                <Sep />
                {tools([["Pin Labels", "abPinDim"], ["Show Labels", "abcEye"], ["Move Label", "abcMove"]])}
                <More />
              </Bar>
              <Bar className="w-[148px] pl-[11px] pr-2">
                <Grip />
                <Tool name="Select Features" icon="select" />
                <MenuArrow name="Select options" />
                <More />
              </Bar>
              <Bar className="w-[124px] pl-[11px] pr-2">
                <Grip />
                <Tool name="Identify Features" icon="identify" />
                <More />
              </Bar>
            </Row>

            <Row>
              <Bar className="pl-2 pr-1.5">
                <Grip />
                {tools([["Data Source Manager", "dataSource"], ["New GeoPackage Layer", "geopackage"], ["New Shapefile Layer", "shapefile"], ["New SpatiaLite Layer", "spatialite"], ["New Temporary Layer", "memory"]])}
                <Sep />
                <Tool name="New Virtual Layer" icon="virtual" />
                <Sep />
              </Bar>
              <Bar>
                <Grip />
                {tools([["Current Edits", "pencils"], ["Toggle Editing", "pencil"], ["Save Layer Edits", "saveEdits"], ["Add Point Feature", "addPoints"], ["Vertex Tool", "vertexTool"]])}
                <MenuArrow name="Vertex tool options" />
                {tools([["Modify Attributes", "attributes"], ["Delete Selected", "trash"], ["Cut Features", "cut"], ["Copy Features", "copy"], ["Paste Features", "paste"], ["Undo", "undo"], ["Redo", "redo"]])}
              </Bar>
              <Bar>
                <Grip />
                {tools([["Add Web Layer", "globeAdd"], ["Search Web Layers", "globeSearch"], ["MetaSearch", "metaSearch"]])}
              </Bar>
              <Bar>
                <Grip />
                <Tool name="Python Console" icon="python">
                  <span className="pointer-events-none absolute -inset-x-[14px] -top-3 -bottom-4 z-10 rounded-[24px] border-[5px] border-[#e94722]" />
                </Tool>
              </Bar>
              <Bar>
                <Grip />
                <Tool name="Help Contents" icon="help" />
              </Bar>
              <Bar>
                <Grip />
              </Bar>
            </Row>

            <Row last>
              <Bar className="pl-2 pr-1.5">
                <Grip />
                {tools([["Digitize with Curve", "curve"], ["Advanced Digitizing", "advDigitize"], ["Move Feature", "movePoint"]])}
                <MenuArrow name="Move options" />
                {tools([
                  ["Rotate Feature", "rotate"], ["Scale Feature", "scale"], ["Add Ring", "addRing"], ["Add Part", "addPart"],
                  ["Fill Ring", "fillRing"], ["Delete Ring", "delRing"], ["Delete Part", "delPart"], ["Reshape Features", "reshape"],
                  ["Offset Curve", "offset"], ["Reverse Line", "reverse"], ["Trim or Extend", "trim"], ["Split Features", "split"],
                  ["Split Parts", "split"], ["Merge Features", "merge"], ["Merge Attributes", "mergeAttr"], ["Rotate Point Symbols", "symbols"],
                ])}
                <MenuArrow name="Symbol options" />
              </Bar>
              <Bar>
                <Grip />
                <Tool name="Enable Snapping" icon="magnet" checked />
                <Tool name="All Layers" icon="snapLayers" />
                <Tool name="Vertex" icon="snapVertex" checked />
                <div className="ml-px flex h-11 w-[194px] rounded-md border-2 border-[#282828] bg-[#1e1e1e]">
                  <input aria-label="Snapping tolerance" defaultValue="12" className="h-full min-w-0 flex-1 bg-transparent pb-1 pl-2 text-[25px] font-medium text-white outline-none" />
                  <span className="flex w-7 shrink-0 flex-col justify-center gap-2 rounded-r border-2 border-[#505050] bg-[#353535]">
                    <button type="button" aria-label="Increase" className="flex justify-center">
                      <svg viewBox="0 0 16 8" className="h-2 w-4" aria-hidden="true"><path d="M0 8H16L8 0Z" fill="#a9a9a9" /></svg>
                    </button>
                    <button type="button" aria-label="Decrease" className="flex justify-center">
                      <svg viewBox="0 0 16 8" className="h-2 w-4" aria-hidden="true"><path d="M0 0H16L8 8Z" fill="#a9a9a9" /></svg>
                    </button>
                  </span>
                </div>
                <div className="relative ml-1.5 mr-1 flex h-[46px] w-[196px] items-center rounded-md border-2 border-[#565656] bg-linear-to-b from-[#4a4a4a] to-[#3a3a3a] outline-1 outline-[#262626]">
                  <select aria-label="Snapping unit" defaultValue="px" className="h-full w-full appearance-none bg-transparent pl-2 text-[25px] font-medium text-black outline-none">
                    <option>px</option>
                    <option>meters</option>
                  </select>
                  <svg viewBox="0 0 16 8" className="pointer-events-none absolute right-3 h-2 w-4" aria-hidden="true"><path d="M0 0H16L8 8Z" fill="#1c1c1c" /></svg>
                </div>
                {tools([["Topological Editing", "topology"], ["Avoid Overlap", "overlap"], ["Snapping on Intersection", "intersect"], ["Self Snapping", "selfSnap"]])}
                <MenuArrow name="Self snapping options" />
                <Tool name="Enable Tracing" icon="trace" />
              </Bar>
            </Row>
          </nav>

          <div className="flex min-h-0 flex-1">
            <BrowserPanel />
            <div className="flex-1 border-t border-l border-[#222] bg-white pt-[232px] pl-[251px]">
              <p className="font-['Liberation_Sans',Arial,sans-serif] text-4xl leading-[44px] text-black">Launch the python console</p>
            </div>
          </div>
        </div>
      </section>

      <svg viewBox="0 0 543 308" className="pointer-events-none absolute top-[255px] left-[1015px] h-[308px] w-[543px] overflow-visible" aria-hidden="true">
        <path d="M-1 306L524 12" stroke="#e94722" strokeWidth="5" />
        <path d="M542 1L514 3L529 25Z" fill="#e94722" />
      </svg>
    </main>
  );
}
